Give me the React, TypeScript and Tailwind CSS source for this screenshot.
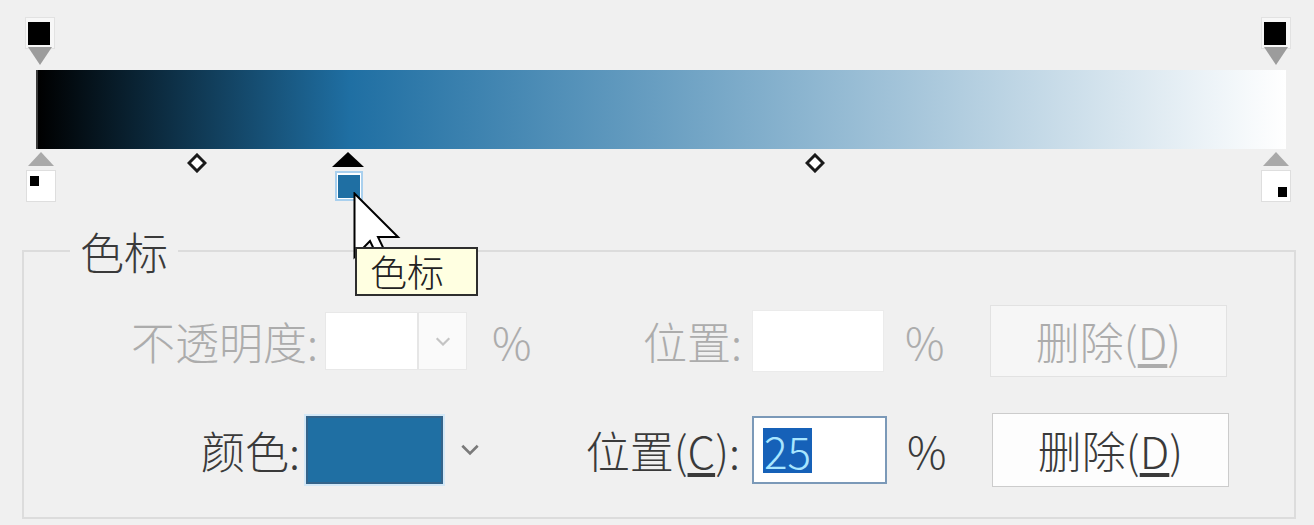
import React from 'react';

const ink = 'text-[#3a3a3a]';
const dim = 'text-[#acacac]';

const Chevron: React.FC<{ className?: string; w?: number }> = ({ className, w = 16 }) => (
  <svg width={w} height={w * 0.6} viewBox="0 0 20 12" className={className}>
    <path d="M3 2.5 L10 9.5 L17 2.5" fill="none" stroke="currentColor" strokeWidth="2.4" />
  </svg>
);

// opacity stop above the bar
const TopStop: React.FC<{ left: string }> = ({ left }) => (
  <svg width="30" height="50" viewBox="0 0 30 50" className={`absolute top-[17px] ${left}`}>
    <rect x="0.5" y="0.5" width="29" height="31" fill="#f7f7f7" stroke="#e2e2e2" />
    <rect x="3" y="5" width="22" height="23" fill="#000" />
    <polygon points="3,30 27,30 15,48" fill="#9c9c9c" />
  </svg>
);

// colour stop under the bar, small black mark in one corner
const BottomStop: React.FC<{ left: string; mark: 'tl' | 'br' }> = ({ left, mark }) => (
  <svg width="30" height="52" viewBox="0 0 30 52" className={`absolute top-[151px] ${left}`}>
    <polygon points="15,1 28,15 2,15" fill="#a9a9a9" />
    <rect x="0.5" y="19.5" width="29" height="31" fill="#fff" stroke="#dedede" />
    {mark === 'tl'
      ? <rect x="4" y="25" width="9" height="10" fill="#000" />
      : <rect x="17" y="36" width="9" height="10" fill="#000" />}
  </svg>
);

const Midpoint: React.FC<{ left: string }> = ({ left }) => (
  <svg width="20" height="20" viewBox="0 0 20 20" className={`absolute top-[153px] ${left}`}>
    <polygon points="10,2 18,10 10,18 2,10" fill="#fff" stroke="#1a1a1a" strokeWidth="3" />
  </svg>
);

const App: React.FC = () => {
  return (
    <div className="relative w-[1314px] h-[525px] overflow-hidden bg-[#f0f0f0] font-['Noto_Sans_CJK_SC',sans-serif] font-light">
      <div className="relative h-[229px] pt-[70px]">
        <div className="ml-[36px] h-[79px] w-[1250px] border-l-2 border-[#3a3a3a] bg-[linear-gradient(to_right,#000_0%,#1f6fa3_25%,#ffffff_100%)]" />

        <TopStop left="left-[25px]" />
        <TopStop left="left-[1261px]" />

        <BottomStop left="left-[26px]" mark="tl" />
        <BottomStop left="left-[1261px]" mark="br" />

        <Midpoint left="left-[187px]" />
        <Midpoint left="left-[805px]" />

        {/* selected colour stop */}
        <svg width="34" height="52" viewBox="0 0 34 52" className="absolute left-[332px] top-[151px]">
          <polygon points="16,1 32,16 0,16" fill="#000" />
          <rect x="4" y="21" width="26" height="28" fill="#fff" stroke="#a9d0ee" strokeWidth="2" />
          <rect x="6" y="24" width="22" height="23" fill="#1f6fa3" />
        </svg>
      </div>

      <fieldset className="ml-[22px] h-[290px] w-[1274px] border-2 border-[#dcdcdc]">
        <legend className={`ml-[46px] px-[10px] text-[44px] leading-[44px] ${ink}`}>色标</legend>

        <div className="mt-[32px] flex h-[72px] items-center text-[44px] leading-none">
          <div className={`w-[294px] text-right ${dim}`}>不透明度:</div>
          <div className="ml-[7px] flex h-[58px] w-[142px] border border-[#e8e8e8] bg-[#fafafa]">
            <div className="w-[93px] border-r-2 border-[#e6e6e6] bg-white" />
            <div className="flex flex-1 items-center justify-center text-[#c4c4c4]">
              <Chevron w={18} />
            </div>
          </div>
          <div className={`ml-[25px] w-[35px] ${dim}`}>%</div>
          <div className={`w-[215px] text-right ${dim}`}>位置:</div>
          <div className="ml-[10px] h-[62px] w-[132px] border border-[#ebebeb] bg-white" />
          <div className={`ml-[21px] w-[35px] ${dim}`}>%</div>
          <div className={`ml-[50px] flex h-[72px] w-[237px] items-center justify-center border border-[#e2e2e2] bg-[#f6f6f6] ${dim}`}>
            删除(<span className="underline underline-offset-4">D</span>)
          </div>
        </div>

        <div className="mt-[36px] flex h-[74px] items-center text-[44px] leading-none">
          <div className={`w-[276px] text-right ${ink}`}>颜色:</div>
          <div className="ml-[6px] h-[68px] w-[137px] border-2 border-[#35648a] bg-[#1f6fa3] shadow-[0_0_0_2px_#d3e8f7]" />
          <div className="ml-[15px] flex w-[24px] justify-center text-[#7a7a7a]">
            <Chevron w={22} />
          </div>
          <div className={`w-[258px] text-right ${ink}`}>
            位置(<span className="underline underline-offset-4">C</span>):
          </div>
          <div className="ml-[12px] flex h-[68px] w-[135px] items-center border-2 border-[#7b99b8] bg-white pl-[9px]">
            <span className="h-[45px] bg-[#1661b8] px-[1px] leading-[45px] text-[#a8e6ff]">25</span>
          </div>
          <div className={`ml-[20px] w-[35px] ${ink}`}>%</div>
          <div className={`ml-[50px] flex h-[74px] w-[237px] items-center justify-center border border-[#cccccc] bg-[#fdfdfd] ${ink}`}>
            删除(<span className="underline underline-offset-4">D</span>)
          </div>
        </div>
      </fieldset>

      {/* mouse pointer, partly under the tooltip */}
      <svg width="50" height="78" viewBox="0 0 50 78" className="absolute left-[353px] top-[192px]">
        <path d="M1.5 1.5 V65 L17 49 L29 74 L37 70 L25 45 H45 Z" fill="#fff" stroke="#000" strokeWidth="2" />
      </svg>

      <div className="absolute left-[355px] top-[247px] flex h-[49px] w-[123px] items-center border-2 border-[#2e2e2e] bg-[#ffffe1] pl-[13px] text-[37px] leading-none text-[#222]">
        色标
      </div>
    </div>
  );
};

export default App;
